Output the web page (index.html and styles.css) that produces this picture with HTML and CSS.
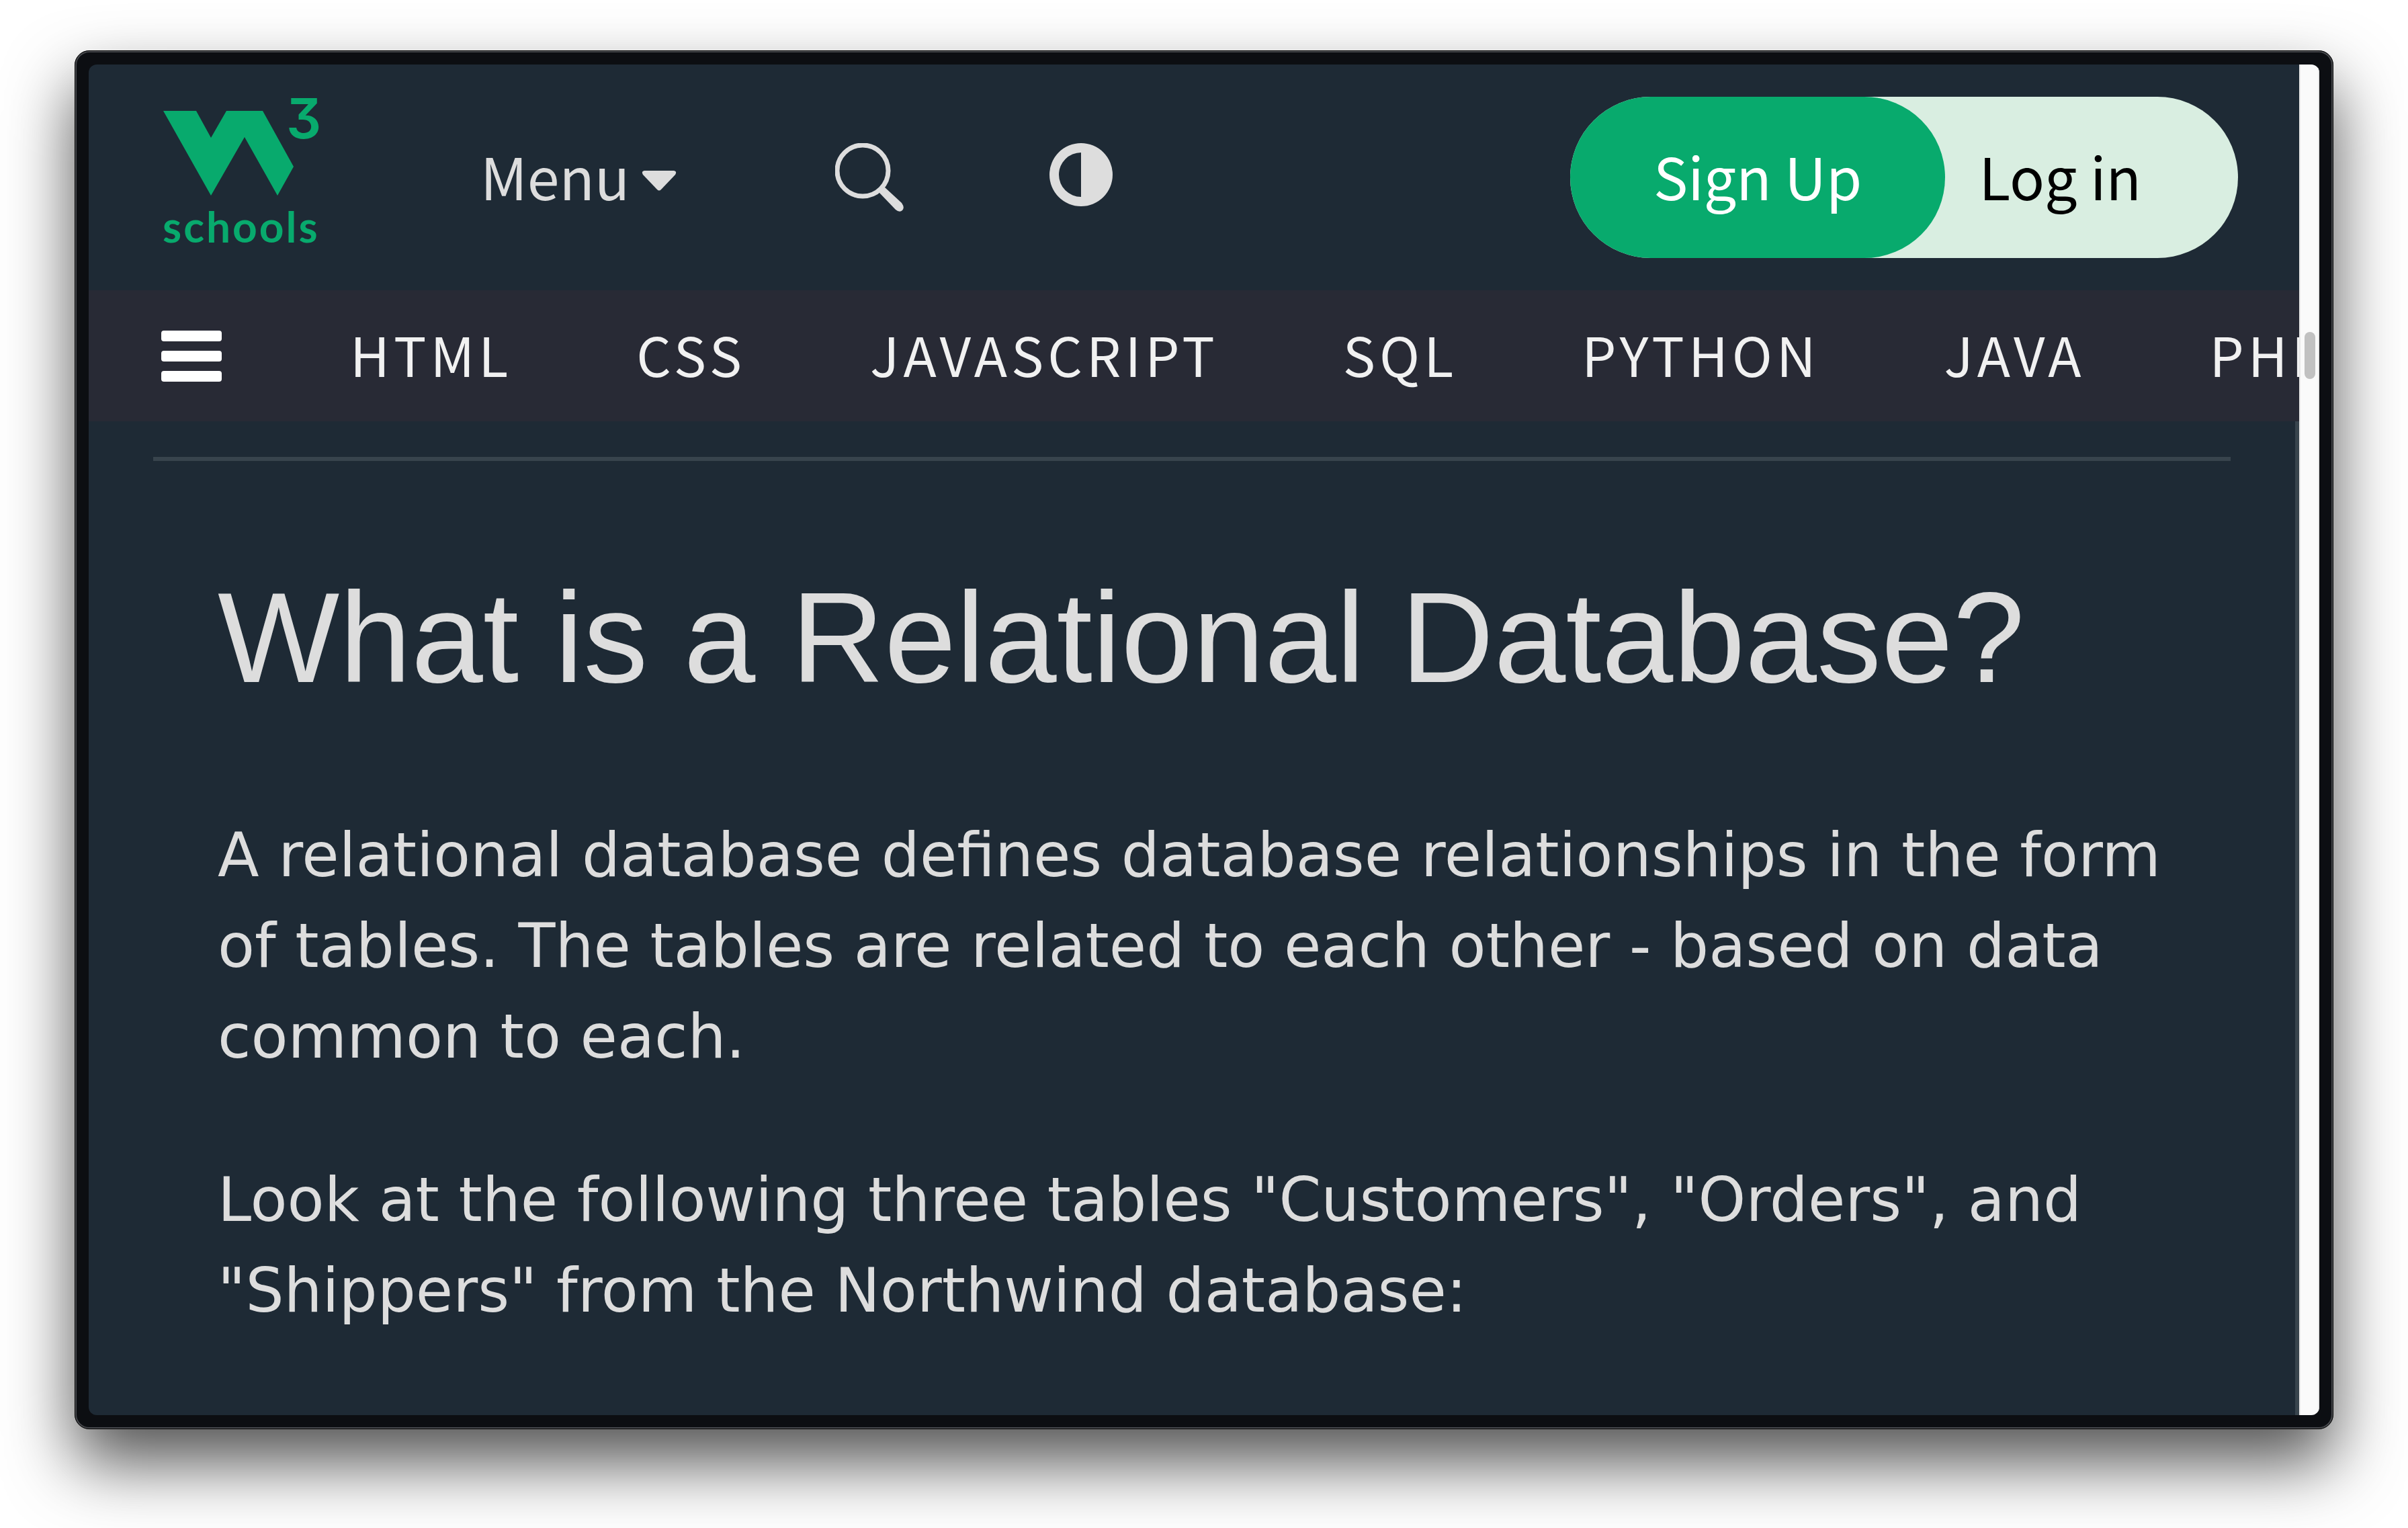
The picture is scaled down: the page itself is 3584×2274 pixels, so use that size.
FILE: index.html
```html
<!DOCTYPE html>
<html lang="en">
<head>
<meta charset="utf-8">
<title>What is a Relational Database?</title>
<link rel="stylesheet" href="styles.css">
</head>
<body>
<div class="window">
  <div class="screen">
    <div class="page">
      <header class="topbar">
        <a class="logo" href="#" aria-label="W3Schools home">
          <svg class="logo-mark" width="232" height="220" viewBox="0 0 232 220" aria-hidden="true">
            <path d="M0 21H49L71 61L94 21H148L194 104L170 147L121 60L71 147Z"/>
            <text class="logo-three" x="183" y="62">3</text>
            <text class="logo-name" x="-1" y="217">schools</text>
          </svg>
        </a>
        <button class="menu" type="button">Menu
          <svg width="52" height="30" viewBox="0 0 52 30" aria-hidden="true"><path d="M4 0H48Q53 1 50 6L29 28Q26 31 23 28L2 6Q-1 1 4 0Z"/></svg>
        </button>
        <button class="icon search" type="button" aria-label="Search">
          <svg width="102" height="102" viewBox="0 0 102 102" aria-hidden="true"><circle cx="41" cy="41" r="38" fill="none" stroke="currentColor" stroke-width="7"/><path d="M65 73L73 65L99 89Q104 96 100 100Q96 104 90 99Z"/></svg>
        </button>
        <button class="icon contrast" type="button" aria-label="Toggle dark mode">
          <svg width="94" height="94" viewBox="0 0 94 94" aria-hidden="true"><path fill-rule="evenodd" d="M47 0A47 47 0 0 1 47 94A47 47 0 0 1 47 0ZM47 14A33 33 0 0 0 47 80Z"/></svg>
        </button>
        <div class="account">
          <a class="signup" href="#">Sign Up</a>
          <a class="login" href="#">Log in</a>
        </div>
      </header>
      <nav class="subjects" aria-label="Tutorials">
        <button class="burger" type="button" aria-label="Open tutorial menu">
          <svg width="90" height="76" viewBox="0 0 90 76" aria-hidden="true"><rect width="90" height="16" rx="4"/><rect y="30" width="90" height="16" rx="4"/><rect y="60" width="90" height="16" rx="4"/></svg>
        </button>
        <a href="#">HTML</a>
        <a href="#">CSS</a>
        <a href="#">JAVASCRIPT</a>
        <a href="#">SQL</a>
        <a href="#">PYTHON</a>
        <a href="#">JAVA</a>
        <a href="#">PHP</a>
      </nav>
      <main class="content">
        <hr>
        <article>
          <h2>What is a Relational Database?</h2>
          <p>A relational database defines database relationships in the form of tables. The tables are related to each other - based on data common to each.</p>
          <p>Look at the following three tables "Customers", "Orders", and "Shippers" from the Northwind database:</p>
        </article>
      </main>
    </div>
    <div class="scrollbar"><div class="thumb"></div></div>
  </div>
</div>
</body>
</html>
```

FILE: styles.css
```css
* { box-sizing: border-box; }

body {
  margin: 0;
  min-height: 100vh;
  padding: 75px 111px 147px;
  display: flex;
  background: #fff;
  color: #ddd;
}

.window {
  flex: 1;
  min-width: 0;
  display: flex;
  padding: 18px;
  background: #0c0e12;
  border: 3px solid #46484c;
  border-radius: 22px;
  box-shadow: 0 50px 100px rgba(0, 0, 0, .68);
  outline: 1px solid #000;
  outline-offset: -1px;
}

.screen {
  flex: 1;
  min-width: 0;
  display: flex;
  overflow: hidden;
  border-radius: 12px;
  background: #1e2a35;
}

.page {
  flex: 1;
  min-width: 0;
  display: flex;
  flex-direction: column;
}

button {
  padding: 0;
  border: 0;
  background: none;
  color: inherit;
  font: inherit;
}

a { color: inherit; text-decoration: none; }

svg { display: block; fill: currentColor; }

.topbar {
  display: flex;
  align-items: flex-start;
  min-height: 336px;
  padding: 48px 91px 48px 111px;
  font: 86px/234px "Noto Sans CJK SC", "Noto Sans", sans-serif;
}

.logo { color: #08aa6d; }

.logo-mark { overflow: visible; }

.logo-three {
  font: 600 82px Inter, sans-serif;
  font-feature-settings: "cv09";
}

.logo-name {
  font: 700 64px Lato, sans-serif;
  letter-spacing: 3px;
}

.menu {
  display: flex;
  align-items: center;
  gap: 18px;
  margin-left: 240px;
}

.menu svg { margin-top: 16px; }

.icon { margin-top: 69px; }

.search { margin-left: 236px; }

.contrast { margin-left: 217px; }

.account {
  display: flex;
  height: 240px;
  margin-left: auto;
  border-radius: 120px;
  background: #d9eee1;
  color: #000;
}

.signup {
  padding: 0 124px;
  border-radius: 120px;
  background: #08aa6d;
  color: #fff;
}

.login { padding: 0 144px 0 50px; }

.subjects {
  display: flex;
  align-items: center;
  gap: 1px;
  height: 195px;
  padding: 0 0 7px 108px;
  overflow: hidden;
  background: #282a35;
  color: #f1f1f1;
  font: 81px/186px "Noto Sans CJK SC", "Noto Sans", sans-serif;
  letter-spacing: 6px;
}

.subjects a { flex: none; padding: 0 92px; }

.burger {
  flex: none;
  margin: 7px 98px 0 0;
  color: #fff;
}

.content {
  flex: 1;
  padding: 53px 96px;
  border-right: 6px solid #38444d;
}

hr {
  height: 6px;
  margin: 0;
  border: 0;
  background: #38444d;
}

article { padding: 119px 96px 0; }

h2 {
  margin: 0 0 112px;
  font: 400 192px/288px "Liberation Sans", Arial, sans-serif;
}

p {
  margin: 0;
  font: 90px/135px Verdana, "DejaVu Sans", sans-serif;
}

p + p { margin-top: 108px; }

.scrollbar {
  width: 30px;
  padding: 398px 4px 0 6px;
  background: #fafafa;
  border: solid #e8e8e8;
  border-width: 0 2px;
}

.thumb {
  height: 70px;
  border-radius: 8px;
  background: #c1c1c1;
}
```
